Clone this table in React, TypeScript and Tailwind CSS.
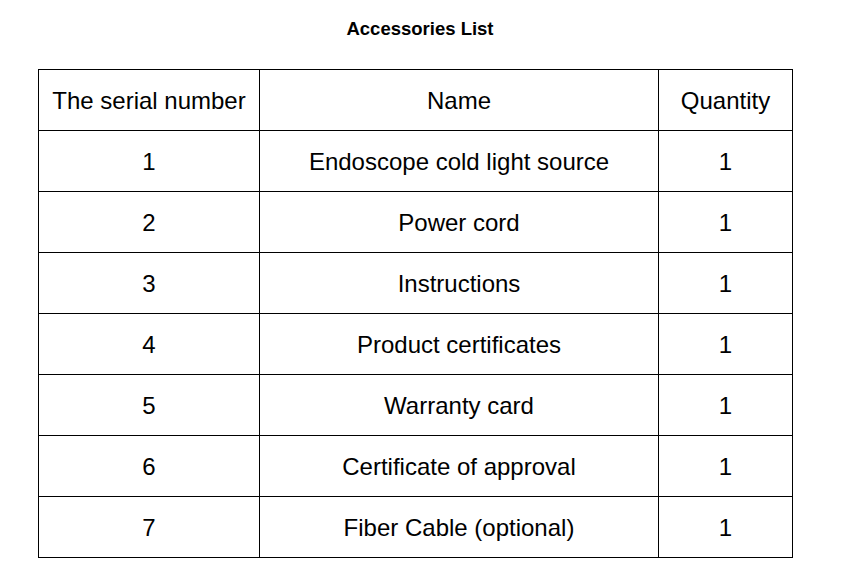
const rows = [
  ['1', 'Endoscope cold light source', '1'],
  ['2', 'Power cord', '1'],
  ['3', 'Instructions', '1'],
  ['4', 'Product certificates', '1'],
  ['5', 'Warranty card', '1'],
  ['6', 'Certificate of approval', '1'],
  ['7', 'Fiber Cable (optional)', '1'],
]

export default function App() {
  return (
    <div className="min-h-screen bg-white pl-[38px] pt-[18px] text-black [font-family:'Liberation_Sans',Arial,sans-serif]">
      <h2 className="w-[755px] pl-[9px] text-center text-[18.5px] font-bold leading-[22px]">Accessories List</h2>
      <table className="mt-[29px] w-[755px] table-fixed border-collapse text-[24px]">
        <colgroup>
          <col className="w-[221px]" />
          <col className="w-[399px]" />
          <col className="w-[134px]" />
        </colgroup>
        <thead>
          <tr className="h-[61px]">
            <th className="border border-black p-0 pt-[2px] text-center font-normal">The serial number</th>
            <th className="border border-black p-0 pt-[2px] text-center font-normal">Name</th>
            <th className="border border-black p-0 pt-[2px] text-center font-normal">Quantity</th>
          </tr>
        </thead>
        <tbody>
          {rows.map((r) => (
            <tr key={r[0]} className="h-[61px]">
              <td className="border border-black p-0 pt-[2px] text-center">{r[0]}</td>
              <td className="border border-black p-0 pt-[2px] text-center">{r[1]}</td>
              <td className="border border-black p-0 pt-[2px] text-center">{r[2]}</td>
            </tr>
          ))}
        </tbody>
      </table>
    </div>
  )
}
